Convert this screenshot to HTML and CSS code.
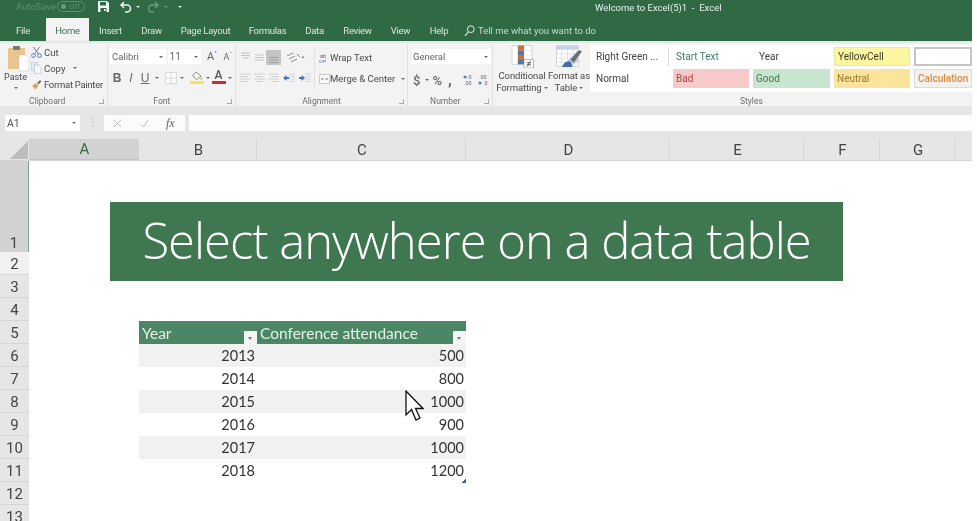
FILE: index.html
```html
<!DOCTYPE html>
<html lang="en">
<head>
<meta charset="utf-8">
<title>Welcome to Excel(5)1 - Excel</title>
<link rel="stylesheet" href="styles.css">
</head>
<body>
<div class="app">
  <header class="titlebar">
    <div class="qat">
      <span class="autosave">AutoSave</span>
      <span class="toggle"><i class="toggle-dot"></i>Off</span>
      <svg class="qat-save" viewBox="0 0 11 11"><path fill="#f2f6f3" d="M0 0h9l2 2v9H0z"/><path fill="#2f6a45" d="M2 1h6v3.500H2zM2.500 7h6v4h-6z"/><path fill="#f2f6f3" d="M6 8h1.500v2H6z"/></svg>
      <svg class="qat-undo" viewBox="0 0 12 12"><path d="M4 1 1 4l3 3M1.500 4H7a3.500 3.500 0 0 1 0 7H5" fill="none" stroke="#f2f6f3" stroke-width="1.500"/></svg>
      <i class="caret caret-light"></i>
      <svg class="qat-redo" viewBox="0 0 12 12"><path d="M8 1l3 3-3 3M10.500 4H5a3.500 3.500 0 0 0 0 7h2" fill="none" stroke="#6f9a80" stroke-width="1.300"/></svg>
      <i class="caret caret-dim"></i>
      <i class="caret caret-light caret-custom"></i>
    </div>
    <div class="doc-title">Welcome to Excel(5)1&nbsp; - &nbsp;Excel</div>
    <nav class="tabs">
      <span class="tab">File</span>
      <span class="tab tab-active">Home</span>
      <span class="tab">Insert</span>
      <span class="tab">Draw</span>
      <span class="tab">Page Layout</span>
      <span class="tab">Formulas</span>
      <span class="tab">Data</span>
      <span class="tab">Review</span>
      <span class="tab">View</span>
      <span class="tab">Help</span>
      <span class="tell">
        <svg class="tell-icon" viewBox="0 0 11 12"><circle cx="6.800" cy="4.200" r="3.400" fill="none" stroke="#dfeae3" stroke-width="1"/><path d="M4.300 6.800 1 10.800" stroke="#dfeae3" stroke-width="1.200"/></svg>
        Tell me what you want to do
      </span>
    </nav>
  </header>

  <section class="ribbon">
    <div class="group group-clip">
      <div class="group-body clip-body">
        <div class="paste">
          <svg class="paste-icon" viewBox="0 0 22 27"><path fill="#e9c48c" d="M0 3h17v21H0z"/><path fill="#7a7a7a" d="M5 1h7v4H5z"/><path fill="#fff" stroke="#cfcfcf" stroke-width=".6" d="M11 10h7l3 3v13H11z"/></svg>
          <span class="paste-label">Paste</span>
          <i class="caret"></i>
        </div>
        <div class="clip-items">
          <div class="clip-item">
            <svg class="icon-sm" viewBox="0 0 11 12"><path d="M2.500 1l5 7M8.500 1l-5 7" stroke="#6d7f9a" stroke-width="1"/><circle cx="2.500" cy="9.500" r="1.900" fill="none" stroke="#5b7fb3"/><circle cx="8.500" cy="9.500" r="1.900" fill="none" stroke="#5b7fb3"/></svg>
            <span>Cut</span>
          </div>
          <div class="clip-item">
            <svg class="icon-sm" viewBox="0 0 11 12"><path fill="#e4e9ee" stroke="#b9c3cd" stroke-width=".6" d="M.5.500h6v8h-6z"/><path fill="#f7f9fb" stroke="#aeb9c6" stroke-width=".6" d="M3.500 3h4l2.500 2.500v6H3.500z"/></svg>
            <span>Copy</span><i class="caret caret-gap"></i>
          </div>
          <div class="clip-item clip-tight">
            <svg class="icon-sm" viewBox="0 0 11 12"><path fill="#d9a55d" d="M1 7l4-3 2.500 3-3 3.500z"/><path fill="#707070" d="M6 4l3-3 1.500 1.500-3 3z"/></svg>
            <span>Format Painter</span>
          </div>
        </div>
      </div>
      <div class="group-label group-label-left"><span></span><span>Clipboard</span><i class="launcher"></i></div>
    </div>

    <div class="group group-font">
      <div class="group-body font-body">
        <div class="font-row">
          <span class="combo combo-font">Calibri<i class="caret"></i></span>
          <span class="combo combo-size">11<i class="caret"></i></span>
          <span class="grow">A<sup class="tiny">^</sup></span>
          <span class="grow grow-small">A<sup class="tiny">ˇ</sup></span>
        </div>
        <div class="font-row font-row-2">
          <b class="fmt">B</b>
          <i class="fmt fmt-i">I</i>
          <u class="fmt">U</u><i class="caret"></i>
          <svg class="icon-border" viewBox="0 0 13 13"><path fill="#fbfbfb" stroke="#d6d6d6" d="M.5.500h12v12H.5zM6.500.500v12M.5 6.500h12"/></svg><i class="caret"></i>
          <span class="fill">
            <svg class="icon-bucket" viewBox="0 0 13 9"><path fill="#f8f8f8" stroke="#8a8a8a" d="M6 1l5 4-4 3.500L2.500 5z"/><path fill="#cdb23c" d="M11 5.500l1.500 3h-2z"/></svg>
            <i class="bar bar-yellow"></i>
          </span><i class="caret"></i>
          <span class="fill"><span class="color-a">A</span><i class="bar bar-red"></i></span><i class="caret"></i>
        </div>
      </div>
      <div class="group-label group-label-left"><span></span><span>Font</span><i class="launcher"></i></div>
    </div>

    <div class="group group-align">
      <div class="group-body align-body">
        <div class="align-grid">
          <svg class="al" viewBox="0 0 13 13"><path stroke="#c4c4c4" stroke-width="1.200" d="M2 2h9M2 4.500h9M3.500 7h6"/></svg>
          <svg class="al" viewBox="0 0 13 13"><path stroke="#c4c4c4" stroke-width="1.200" d="M2 4h9M2 6.500h9M2 9h9"/></svg>
          <svg class="al al-on" viewBox="0 0 15 15"><rect width="15" height="15" fill="#c4c4c4"/><path stroke="#a2a2a2" stroke-width="1.200" d="M3 7.500h9M3 10h9M3 12.500h9"/></svg>
          <svg class="al al-wide" viewBox="0 0 20 13"><path stroke="#8a8a8a" fill="none" d="M1 5l6-3M3 8l6-3M5 11l6-3M11 3l3 3"/><path d="M17 5l-1.500 2h3z" fill="#777"/></svg>
          <svg class="al" viewBox="0 0 13 13"><path stroke="#cfcfcf" stroke-width="1.200" d="M1 2h11M1 4.500h8M1 7h11M1 9.500h8"/></svg>
          <svg class="al" viewBox="0 0 13 13"><path stroke="#cfcfcf" stroke-width="1.200" d="M1 2h11M3 4.500h7M1 7h11M3 9.500h7"/></svg>
          <svg class="al" viewBox="0 0 13 13"><path stroke="#cfcfcf" stroke-width="1.200" d="M1 2h11M4 4.500h8M1 7h11M4 9.500h8"/></svg>
          <span class="indents">
            <svg class="al" viewBox="0 0 13 13"><path stroke="#d6d6d6" stroke-width="1.200" d="M7 2h6M7 4.500h6M7 7h6M7 9.500h6"/><path fill="#3f78b3" d="M1 6l3.500-3v2H7v2H4.500v2z"/></svg>
            <svg class="al" viewBox="0 0 13 13"><path stroke="#d6d6d6" stroke-width="1.200" d="M7 2h6M7 4.500h6M7 7h6M7 9.500h6"/><path fill="#3f78b3" d="M7 6 3.500 3v2H1v2h2.500v2z"/></svg>
          </span>
        </div>
        <div class="align-cmds">
          <div class="cmd">
            <svg class="icon-sm" viewBox="0 0 11 12"><text x="1" y="5.500" class="svg-mini">ab</text><text x="0" y="11" class="svg-mini svg-blue">c↵</text></svg>
            <span>Wrap Text</span>
          </div>
          <div class="cmd">
            <svg class="icon-sm" viewBox="0 0 11 12"><path fill="#fafafa" stroke="#9a9a9a" stroke-width=".7" stroke-dasharray="1.400 .8" d="M.5 1.500h10v9H.5z"/><path stroke="#3f78b3" d="M2 6h2.500M6.500 6H9"/></svg>
            <span>Merge &amp; Center</span><i class="caret caret-gap"></i>
          </div>
        </div>
      </div>
      <div class="group-label"><span></span><span>Alignment</span><i class="launcher"></i></div>
    </div>

    <div class="group group-num">
      <div class="group-body num-body">
        <span class="combo combo-num">General<i class="caret"></i></span>
        <div class="num-row">
          <span class="num-sym">$</span><i class="caret"></i>
          <span class="num-sym num-pct">%</span>
          <span class="num-sym num-comma">,</span>
          <svg class="icon-dec" viewBox="0 0 11 12"><path fill="#3f78b3" d="M0 3l2.500-2v1.500H4v1H2.500V5z"/><text x="4" y="5" class="svg-mini">.0</text><text x="1" y="11" class="svg-mini">.00</text></svg>
          <svg class="icon-dec icon-dec-2" viewBox="0 0 11 12"><text x="1" y="5" class="svg-mini">.00</text><path fill="#3f78b3" d="M4 9 1.500 7v1.500H0v1h1.500V11z"/><text x="5" y="11" class="svg-mini">.0</text></svg>
        </div>
      </div>
      <div class="group-label group-label-left"><span></span><span>Number</span><i class="launcher"></i></div>
    </div>

    <div class="group-styles">
      <div class="style-cmds">
        <div class="big-cmd">
          <svg class="big-icon" viewBox="0 0 21 22">
            <path fill="#fff" stroke="#c8c8c8" stroke-width=".7" d="M.5.500h19v18H.5z"/>
            <path fill="#c96f3d" d="M6 .5h6v5H6z"/><path fill="#4d78a8" d="M6 5.500h6v4H6z"/><path fill="#c96f3d" d="M6 9.500h6v4H6z"/><path fill="#4d78a8" d="M6 13.500h6v5H6z"/>
            <path stroke="#d8d8d8" stroke-width=".6" d="M12 5.500h8M12 9.500h8M12 13.500h3"/>
            <path fill="#fff" stroke="#9a9a9a" stroke-width=".7" d="M12 14h9v8h-9z"/>
            <path stroke="#444" stroke-width=".8" d="M14.500 17h4M14.500 19h4M18 15.500l-3 5"/>
          </svg>
          <span class="big-label">Conditional<br>Formatting <i class="caret"></i></span>
        </div>
        <div class="big-cmd big-cmd-table">
          <svg class="big-icon big-icon-wide" viewBox="0 0 25 22">
            <path fill="#fff" stroke="#c8c8c8" stroke-width=".7" d="M.5.500h21v20H.5z"/>
            <path fill="#c5d4e8" d="M.5.500h21v4H.5z"/><path fill="#b9cce4" d="M21 5v11l-8 5H5z"/>
            <path stroke="#d0d8e2" stroke-width=".6" d="M.5 8.500h21M.5 12.500h21M.5 16.500h21M5.500.5v20M11 .5v20M16.500.5v20"/>
            <path fill="#3f6fa8" d="M6 21c1-4 4-6 8-5l2 5z"/><path fill="#6c6c6c" d="M14 14l8-9 3 1-8 11z"/>
          </svg>
          <span class="big-label">Format as<br>Table <i class="caret"></i></span>
        </div>
      </div>
      <div class="gallery-wrap">
        <div class="gallery">
          <span class="st st-plain st-sep">Right Green ...</span>
          <span class="st st-start">Start Text</span>
          <span class="st st-plain">Year</span>
          <span class="st st-yellow">YellowCell</span>
          <span class="st st-empty"></span>
          <span class="st st-plain">Normal</span>
          <span class="st st-bad">Bad</span>
          <span class="st st-good">Good</span>
          <span class="st st-neutral">Neutral</span>
          <span class="st st-calc">Calculation</span>
        </div>
        <div class="styles-label">Styles</div>
      </div>
    </div>
  </section>

  <section class="formula">
    <span class="namebox">A1<i class="caret"></i></span>
    <span class="dots">⋮</span>
    <span class="fx-box">
      <svg class="fx-icon" viewBox="0 0 10 10"><path d="M1 1l8 8M9 1 1 9" stroke="#b5b5b5" stroke-width="1"/></svg>
      <svg class="fx-icon" viewBox="0 0 10 10"><path d="M1 6l3 3 5-8" fill="none" stroke="#b5b5b5" stroke-width="1"/></svg>
      <span class="fx">fx</span>
    </span>
    <span class="formula-input"></span>
  </section>

  <section class="colhead">
    <span class="corner"><svg class="corner-tri" viewBox="0 0 18 18"><path fill="#bdbdbd" d="M18 0v18H0z"/></svg></span>
    <span class="col col-on">A</span>
    <span class="col">B</span>
    <span class="col">C</span>
    <span class="col">D</span>
    <span class="col">E</span>
    <span class="col">F</span>
    <span class="col">G</span>
    <span class="col col-rest"></span>
  </section>

  <section class="sheet">
    <div class="rowhead">
      <span class="row row-1">1</span>
      <span class="row row-2">2</span>
      <span class="row">3</span>
      <span class="row">4</span>
      <span class="row">5</span>
      <span class="row">6</span>
      <span class="row">7</span>
      <span class="row">8</span>
      <span class="row">9</span>
      <span class="row">10</span>
      <span class="row">11</span>
      <span class="row">12</span>
      <span class="row">13</span>
    </div>
    <div class="canvas">
      <div class="banner">Select anywhere on a data table</div>
      <div class="xtable">
        <div class="xrow xhead">
          <span class="xc xc-b">Year<i class="filter"></i></span>
          <span class="xc xc-c">Conference attendance<i class="filter"></i></span>
        </div>
        <div class="xrow xband"><span class="xc xc-b">2013</span><span class="xc xc-c">500</span></div>
        <div class="xrow"><span class="xc xc-b">2014</span><span class="xc xc-c">800</span></div>
        <div class="xrow xband"><span class="xc xc-b">2015</span><span class="xc xc-c">1000</span></div>
        <div class="xrow"><span class="xc xc-b">2016</span><span class="xc xc-c">900</span></div>
        <div class="xrow xband"><span class="xc xc-b">2017</span><span class="xc xc-c">1000</span></div>
        <div class="xrow"><span class="xc xc-b">2018</span><span class="xc xc-c">1200<i class="handle"></i></span></div>
      </div>
      <svg class="pointer" viewBox="0 0 19 31"><path fill="#fff" stroke="#111" stroke-width="1.300" d="M1 1v24l5.500-5.500L11 30l4-2-4.500-9.500H18z"/></svg>
    </div>
  </section>
</div>
</body>
</html>
```

FILE: styles.css
```css
* { box-sizing: border-box; }
html, body { margin: 0; padding: 0; background: #fff; }
body { width: 977px; height: 521px; overflow: hidden; font-family: Roboto, "Liberation Sans", sans-serif; }
.app { width: 972px; height: 521px; overflow: hidden; filter: blur(0.35px); background: #fff; color: #4a4a4a; }

.titlebar { height: 41px; background: #2f6a45; color: #e6efe9; position: relative; }
.qat { height: 13px; display: flex; align-items: center; padding-left: 16px; margin-bottom: 5px; }
.autosave { font-size: 9.500px; color: #5f8d72; width: 41px; }
.toggle { display: flex; align-items: center; width: 28px; height: 11px; border: 1px solid #5f8d72; border-radius: 6px; font-size: 8px; color: #5f8d72; padding-left: 3px; gap: 3px; }
.toggle-dot { width: 5px; height: 5px; border-radius: 50%; background: #6f9a80; }
.qat-save { width: 11px; height: 11px; margin-left: 13px; }
.qat-undo { width: 12px; height: 12px; margin-left: 11px; }
.qat-redo { width: 12px; height: 12px; margin-left: 7px; }
.caret { display: inline-block; width: 0; height: 0; border: 2px solid transparent; border-top: 2.500px solid #6a6a6a; border-bottom: 0; vertical-align: middle; flex: none; }
.caret-light { border-top-color: #e6efe9; margin-left: 4px; }
.caret-dim { border-top-color: #6f9a80; margin-left: 5px; }
.caret-custom { margin-left: 10px; }
.caret-gap { margin-left: 6px; }
.doc-title { position: absolute; top: 2px; left: 595px; font-size: 9.500px; line-height: 11px; color: #e8f0eb; white-space: nowrap; }

.tabs { height: 23px; display: grid; grid-template-columns: 46px 43px 43px 39px 69px 55px 39px 47px 39px 38px auto; font-size: 9.500px; letter-spacing: -.25px; }
.tab { display: flex; align-items: center; justify-content: center; padding-top: 2px; color: #dbe7df; }
.tab-active { background: #f3f3f3; color: #3f6f52; }
.tell { display: flex; align-items: center; padding: 2px 0 0 6px; gap: 3px; color: #c9dbd0; letter-spacing: 0; }
.tell-icon { width: 11px; height: 12px; }

.ribbon { height: 65px; display: flex; background: #f3f3f3; border-top: 2px solid #dfeae3; font-size: 9.500px; }
.group { display: flex; flex-direction: column; border-right: 1px solid #e0e0e0; height: 62px; margin-top: 1px; }
.group-clip { width: 108px; }
.group-font { width: 128px; }
.group-align { width: 172px; }
.group-num { width: 85px; }
.group-body { flex: 1; min-height: 0; }
.group-label { display: grid; grid-template-columns: 1fr auto 1fr; align-items: center; height: 10px; line-height: 10px; font-size: 8.500px; color: #6e6e6e; }
.group-label-left { grid-template-columns: .7fr auto 1fr; }
.launcher { justify-self: end; width: 5px; height: 5px; margin-right: 3px; border-right: 1px solid #aaa; border-bottom: 1px solid #aaa; }

.clip-body { display: flex; }
.paste { width: 31px; display: flex; flex-direction: column; align-items: center; padding-top: 1px; }
.paste-icon { width: 22px; height: 27px; margin-left: 6px; flex: none; }
.paste-label { line-height: 13px; margin-top: -1px; font-size: 9px; }
.paste .caret { margin-top: 3px; }
.clip-items { display: grid; grid-auto-rows: 16.300px; align-content: start; }
.clip-item { display: flex; align-items: center; gap: 2px; white-space: nowrap; }
.clip-tight { letter-spacing: -.28px; }
.icon-sm { width: 11px; height: 12px; flex: none; }

.font-body { padding: 5px 0 0 2px; }
.font-row { display: flex; align-items: center; height: 15px; }
.font-row-2 { margin-top: 6px; }
.combo { display: flex; align-items: center; justify-content: space-between; height: 15px; background: #fff; padding: 0 3px 0 2px; font-size: 9.500px; color: #666; }
.combo-font { width: 58px; }
.combo-size { width: 35px; margin-left: 2px; font-size: 10px; }
.grow { font-size: 11px; margin-left: 6px; color: #666; width: 12px; white-space: nowrap; }
.grow-small { font-size: 9px; margin-left: 5px; }
.tiny { font-size: 6px; line-height: 0; color: #3f78b3; }
.fmt { font-size: 12px; color: #666; width: 14px; text-align: center; font-family: "Liberation Sans", sans-serif; }
.fmt-i { font-style: italic; }
.font-row-2 .caret { margin-left: 3px; }
.icon-border { width: 12px; height: 12px; margin-left: 6px; }
.fill { display: inline-flex; flex-direction: column; align-items: center; width: 13px; margin-left: 6px; height: 15px; }
.fill:last-of-type { margin-left: 2px; }
.icon-bucket { width: 13px; height: 9px; margin-top: 1px; }
.color-a { font-size: 12px; line-height: 11px; color: #555; font-weight: 500; }
.bar { display: block; width: 14px; height: 3px; flex: none; }
.bar-yellow { background: #f2e64f; margin-top: 1px; }
.bar-red { background: #c9302c; }

.align-body { display: flex; padding: 3px 0 0 2px; }
.align-grid { width: 77px; display: grid; grid-template-columns: 14px 14px 14px 32px; grid-auto-rows: 21px; border-right: 1px solid #e3e3e3; height: 44px; align-items: center; justify-items: center; }
.al { width: 13px; height: 13px; display: block; }
.al-on { width: 15px; height: 15px; }
.al-wide { width: 20px; height: 13px; }
.indents { display: flex; gap: 3px; }
.align-cmds { padding-left: 4px; display: grid; grid-auto-rows: 21px; align-items: center; align-content: start; }
.cmd { display: flex; align-items: center; gap: 0; white-space: nowrap; }
.cmd .icon-sm { margin-right: 0; }
.svg-mini { font-size: 5.500px; fill: #666; font-family: Roboto, sans-serif; }
.svg-blue { fill: #3f78b3; }

.num-body { padding: 5px 2px 0 3px; }
.combo-num { width: 80px; }
.num-row { display: flex; align-items: center; height: 22px; margin-top: 5px; padding-left: 2px; color: #666; }
.num-sym { font-size: 13px; font-weight: 500; }
.num-row .caret { margin-left: 5px; }
.num-pct { margin-left: 3px; }
.num-comma { margin-left: 6px; font-weight: 900; font-size: 14px; line-height: 10px; }
.icon-dec { width: 11px; height: 12px; margin-left: 11px; flex: none; }
.icon-dec-2 { margin-left: 4px; }

.group-styles { display: flex; flex: 1; margin-top: 1px; }
.style-cmds { width: 97px; display: flex; }
.big-cmd { width: 58px; display: flex; flex-direction: column; align-items: center; padding-top: 1px; text-align: center; }
.big-cmd-table { width: 36px; }
.big-icon { width: 23px; height: 23px; flex: none; }
.big-icon-wide { width: 26px; }
.big-label { margin-top: 2px; line-height: 12px; white-space: nowrap; letter-spacing: -.1px; }
.gallery-wrap { flex: 1; display: flex; flex-direction: column; }
.gallery { width: 382px; height: 47px; margin-top: 1px; background: #fff; display: grid; grid-template-columns: 83px 80px 81px 80px 58px; grid-auto-rows: 22px; font-size: 10px; overflow: hidden; }
.st { display: flex; align-items: center; margin: 2px 4px 1px 0; padding-left: 3px; white-space: nowrap; color: #444; }
.st-plain { padding-left: 6px; }
.st-sep { border-right: 1px solid #dcdcdc; }
.st-start { color: #3f7f68; }
.st-yellow { background: #fff7a0; border: 1px solid #ebe69a; color: #3b3b2a; }
.st-empty { background: #fff; border: 2px solid #c5c5c5; margin-right: 0; }
.st-bad { background: #f7c9c9; color: #a8444a; }
.st-good { background: #c8e5cf; color: #3f7a50; }
.st-neutral { background: #fde49d; color: #9a7b2c; }
.st-calc { background: #f4f2ef; border: 1px solid #dcdcdc; color: #e08a3a; margin-right: 0; font-weight: 500; }
.styles-label { margin-top: 4px; margin-left: 150px; font-size: 8.500px; color: #6e6e6e; }

.formula { height: 33px; background: #e6e6e6; padding: 9px 0 8px 5px; display: flex; }
.namebox { width: 75px; background: #fff; display: flex; align-items: center; justify-content: space-between; padding: 0 4px 0 2px; font-size: 10.500px; color: #555; }
.dots { width: 24px; text-align: center; font-size: 11px; line-height: 16px; color: #aaa; }
.fx-box { width: 81px; background: #fbfbfb; display: flex; align-items: center; padding-left: 9px; gap: 18px; }
.fx-icon { width: 9px; height: 9px; }
.fx { font-family: "Liberation Serif", serif; font-style: italic; font-size: 12px; color: #666; margin-left: -1px; }
.formula-input { flex: 1; margin-left: 4px; background: #fdfdfd; }

.colhead { height: 22px; background: #e6e6e6; display: grid; grid-template-columns: 29px 110px 118px 209px 204px 134px 76px 75px 1fr; font-size: 15px; color: #444; border-bottom: 1px solid #d6d6d6; }
.corner { display: flex; justify-content: flex-end; align-items: flex-end; padding: 0 1px 1px 0; }
.corner-tri { width: 18px; height: 18px; }
.col { display: flex; align-items: center; justify-content: center; border-right: 1px solid #d8d8d8; padding-left: 2px; }
.col-on { background: #d2d2d2; color: #2f6a45; border-right: 0; border-bottom: 1px solid #b9c9bf; padding-left: 1px; }
.col-rest { border-right: 0; }

.sheet { display: flex; height: 360px; }
.rowhead { width: 29px; flex: none; background: #e6e6e6; display: flex; flex-direction: column; font-size: 15px; color: #444; }
.row { flex: none; height: 23px; line-height: 25px; text-align: center; border-bottom: 1px solid #d6d6d6; }
.row-1 { height: 91px; background: #d2d2d2; line-height: 15px; display: flex; align-items: flex-end; justify-content: center; padding-bottom: 1px; border-bottom: 0; border-right: 1px solid #7fa591; }
.row-2 { background: #f1f1f1; }
.canvas { flex: 1; position: relative; padding: 41px 0 0 81px; }
.banner { width: 733px; height: 79px; background: #3e7750; color: #fff; font-family: "Open Sans", sans-serif; font-weight: 300; font-size: 49px; letter-spacing: -1.030px; line-height: 76px; text-align: center; white-space: nowrap; }
.xtable { width: 327px; margin: 40px 0 0 29px; font-family: Lato, sans-serif; font-size: 14.500px; color: #333; }
.xrow { display: grid; grid-template-columns: 118px 209px; height: 23px; line-height: 24px; }
.xc { position: relative; text-align: right; padding-right: 2px; display: block; }
.xband { background: #f1f1f1; }
.xhead { background: #4b8764; color: #e4f2ea; font-size: 15.500px; }
.xhead .xc { text-align: left; padding-left: 3px; }
.filter { position: absolute; right: 0; bottom: 1px; width: 13px; height: 13px; background: #f4f6f5; }
.filter::after { content: ""; position: absolute; left: 4px; top: 6px; border: 2.500px solid transparent; border-top: 3px solid #777; border-bottom: 0; }
.handle { position: absolute; right: 0; bottom: 0; width: 4px; height: 4px; background: linear-gradient(135deg, transparent 50%, #3f5f9a 50%); }
.pointer { position: absolute; left: 376px; top: 229px; width: 19px; height: 31px; }
```
